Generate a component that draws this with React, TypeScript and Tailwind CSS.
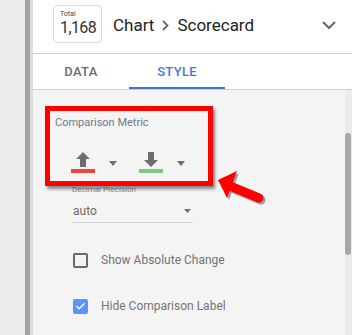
import { Check } from "lucide-react";

function MetricArrow({ dir, bar }: { dir: "up" | "down"; bar: string }) {
  return (
    <div className="flex items-center">
      <div className="flex w-[24px] flex-col items-center">
        <svg width="14" height="15" viewBox="0 0 14 15">
          {dir === "up" ? (
            <path d="M7 0 L14 7 L10 7 L10 15 L4 15 L4 7 L0 7 Z" fill="#6e6e6e" />
          ) : (
            <path d="M4 0 L10 0 L10 8 L14 8 L7 15 L0 8 L4 8 Z" fill="#6e6e6e" />
          )}
        </svg>
        <div className={`mt-[2px] h-[4px] w-[24px] ${bar}`} />
      </div>
      <svg className="ml-[14px] mt-[2px]" width="8" height="5" viewBox="0 0 8 5">
        <path d="M0 0 L8 0 L4 5 Z" fill="#6e6e6e" />
      </svg>
    </div>
  );
}

export default function App() {
  return (
    <div className="flex h-[335px] w-[352px] overflow-hidden bg-[#ebebeb] font-['Roboto',sans-serif]">
      <div className="w-[25px] shrink-0 bg-[#ebebeb]" />
      <div className="w-[5px] shrink-0 bg-[#a3a3a3]" />
      <div className="w-[3px] shrink-0 bg-[#dcdcdc]" />
      <div className="flex flex-1 flex-col">
        <div className="flex h-[54px] shrink-0 items-start border-b border-[#cfcfcf] bg-white">
          <div className="ml-[20px] mt-[5px] flex h-[38px] w-[49px] flex-col rounded-[4px] border border-[#dadada] pl-[6px] pt-[4px]">
            <span className="text-[7px] leading-[8px] text-[#444]">Total</span>
            <span className="text-[16px] leading-[20px] tracking-[-0.6px] text-[#333]">1,168</span>
          </div>
          <div className="ml-[11px] mt-[14px] flex items-center text-[17px] leading-[22px] text-[#222]">
            <span>Chart</span>
            <svg className="mx-[8px]" width="7" height="11" viewBox="0 0 7 11">
              <path d="M1 1 L5.5 5.5 L1 10" stroke="#666" strokeWidth="1.8" fill="none" />
            </svg>
            <span>Scorecard</span>
          </div>
          <svg className="ml-auto mr-[16px] mt-[21px]" width="14" height="9" viewBox="0 0 14 9">
            <path d="M1 1 L7 7 L13 1" stroke="#666" strokeWidth="2" fill="none" />
          </svg>
        </div>
        <div className="flex h-[36px] shrink-0 border-b border-[#cfcfcf] bg-white">
          <div className="flex w-[96px] items-center justify-center text-[13px] font-medium tracking-[0.3px] text-[#6b6b6b]">
            DATA
          </div>
          <div className="flex w-[96px] items-center justify-center border-b-2 border-[#3b6fd9] pt-[2px] text-[13px] font-medium tracking-[0.3px] text-[#4a74e0]">
            STYLE
          </div>
        </div>
        <div className="relative flex flex-1 bg-[#f4f4f4]">
          <div className="flex flex-1 flex-col">
            <div className="ml-[22px] mt-[26px] text-[11px] leading-[14px] text-[#727986]">Comparison Metric</div>
            <div className="ml-[38px] mt-[22px] flex gap-[22px]">
              <MetricArrow dir="up" bar="bg-[#f0443a]" />
              <MetricArrow dir="down" bar="bg-[#81c784]" />
            </div>
            <div className="ml-[39px] mt-[12px] text-[8px] leading-[10px] text-[#8a8a8a]">Decimal Precision</div>
            <div className="ml-[40px] mt-[8px] flex w-[120px] items-center border-b border-[#d4d4d4] pb-[3px]">
              <span className="text-[12px] leading-[16px] text-[#6e6e6e]">auto</span>
              <svg className="ml-auto mr-[2px]" width="7" height="4" viewBox="0 0 7 4">
                <path d="M0 0 L7 0 L3.5 4 Z" fill="#707070" />
              </svg>
            </div>
            <div className="ml-[40px] mt-[29px] flex items-center">
              <div className="h-[15px] w-[15px] rounded-[2px] border-2 border-[#6b6b6b]" />
              <span className="ml-[13px] text-[12px] leading-[16px] text-[#747474]">Show Absolute Change</span>
            </div>
            <div className="ml-[40px] mt-[30px] flex items-center">
              <div className="flex h-[15px] w-[15px] items-center justify-center rounded-[2px] bg-[#5b95f9]">
                <Check className="h-[11px] w-[11px] text-white" strokeWidth={3} />
              </div>
              <span className="ml-[13px] text-[12px] leading-[16px] text-[#747474]">Hide Comparison Label</span>
            </div>
          </div>
          <div className="w-[7px] shrink-0 bg-[#ebebeb] pt-[43px]">
            <div className="h-[122px] w-[6px] rounded-[3px] bg-[#a8a8a8]" />
          </div>
          <div className="absolute left-[12px] top-[16px] h-[80px] w-[168px] border-[5px] border-[#ff0000] shadow-[2px_3px_3px_rgba(0,0,0,0.45)]" />
          <svg className="absolute left-[180px] top-[78px]" width="60" height="40" viewBox="180 78 60 40">
            <g transform="translate(-33 -90)">
              <g transform="translate(2 2)" opacity="0.35">
                <path d="M218 180 L237 171 L227 198 Z" fill="#000" />
                <line x1="230" y1="186" x2="259" y2="198" stroke="#000" strokeWidth="9" strokeLinecap="round" />
              </g>
              <path d="M218 180 L237 171 L227 198 Z" fill="#f00" />
              <line x1="230" y1="186" x2="259" y2="198" stroke="#f00" strokeWidth="9" strokeLinecap="round" />
            </g>
          </svg>
        </div>
      </div>
    </div>
  );
}
